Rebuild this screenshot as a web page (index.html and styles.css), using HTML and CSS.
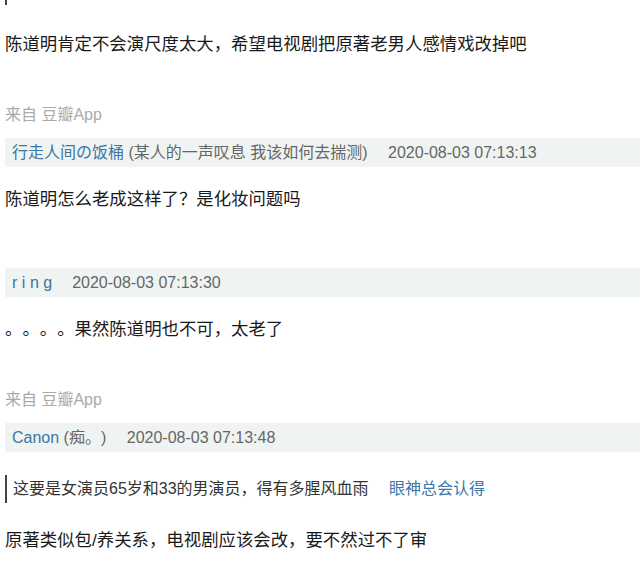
FILE: index.html
```html
<!DOCTYPE html>
<html lang="zh-CN">
<head>
    <meta charset="UTF-8">
    <meta name="viewport" content="width=device-width, initial-scale=1.0">
    <title>回应</title>
    <link rel="stylesheet" href="styles.css">
</head>
<body>
    <div class="comments">
        <div class="quote-tail"></div>

        <div class="comment has-source">
            <p class="comment-text">陈道明肯定不会演尺度太大，希望电视剧把原著老男人感情戏改掉吧</p>
            <div class="source">来自 豆瓣App</div>
        </div>

        <div class="comment">
            <div class="comment-head">
                <a href="#" class="author">行走人间の饭桶</a>
                <span class="sign">(某人的一声叹息 我该如何去揣测)</span>
                <span class="pubtime">2020-08-03 07:13:13</span>
            </div>
            <p class="comment-text">陈道明怎么老成这样了？是化妆问题吗</p>
        </div>

        <div class="comment has-source">
            <div class="comment-head">
                <a href="#" class="author spaced">ring</a>
                <span class="pubtime">2020-08-03 07:13:30</span>
            </div>
            <p class="comment-text">。。。。果然陈道明也不可，太老了</p>
            <div class="source">来自 豆瓣App</div>
        </div>

        <div class="comment">
            <div class="comment-head">
                <a href="#" class="author">Canon</a>
                <span class="sign">(痴。)</span>
                <span class="pubtime">2020-08-03 07:13:48</span>
            </div>
            <div class="reply-quote">
                <span class="quote-text">这要是女演员65岁和33的男演员，得有多腥风血雨</span>
                <a href="#" class="quote-author">眼神总会认得</a>
            </div>
            <p class="comment-text">原著类似包/养关系，电视剧应该会改，要不然过不了审</p>
        </div>
    </div>
</body>
</html>
```

FILE: styles.css
```css
body {
    margin: 0;
    background-color: white;
    font-family: "Liberation Sans", "Noto Sans CJK SC", sans-serif;
    color: #1a1a1a;
    text-spacing-trim: space-all;
}
a {
    text-decoration: none;
    color: #3d75a3;
}
.comments {
    padding-left: 5px;
    overflow: hidden;
}
.quote-tail {
    height: 5px;
    border-left: 2px solid #444;
    margin-bottom: 26px;
}
.comment {
    padding-bottom: 56px;
}
.comment.has-source {
    padding-bottom: 12px;
}
.comment:last-child {
    padding-bottom: 0;
}
.comment-head {
    height: 29px;
    line-height: 29px;
    padding-left: 7px;
    background-color: #eff4f3;
    font-size: 16px;
    white-space: nowrap;
}
.spaced {
    letter-spacing: 4.5px;
    margin-right: -5px;
}
.sign {
    color: #666;
}
.pubtime {
    margin-left: 16px;
    color: #666;
}
.comment-text {
    margin: 19px 0 0;
    font-size: 17.4px;
    line-height: 26px;
}
.source {
    margin-top: 47px;
    font-size: 16px;
    line-height: 22px;
    color: #aaa;
}
.reply-quote {
    margin-top: 23px;
    height: 28px;
    line-height: 28px;
    border-left: 2px solid #444;
    padding-left: 6px;
    font-size: 16px;
    color: #333;
}
.quote-author {
    margin-left: 16px;
}
.reply-quote + .comment-text {
    margin-top: 24px;
}
```
